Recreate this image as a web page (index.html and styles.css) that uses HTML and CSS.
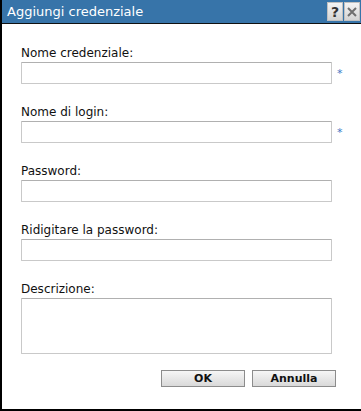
FILE: index.html
```html
<!DOCTYPE html>
<html lang="it">
<head>
  <meta charset="UTF-8">
  <title>Aggiungi credenziale</title>
  <link rel="stylesheet" href="styles.css">
</head>
<body>

  <!-- Dialog -->
  <div class="dialog">
    <div class="dialog-header">
      <span class="dialog-title">Aggiungi credenziale</span>
      <span class="header-btns">
        <span class="header-btn">?</span>
        <span class="header-btn close">
          <svg width="10" height="10" viewBox="0 0 10 10">
            <path d="M1 1 L9 9 M9 1 L1 9" stroke="#6f6f6f" stroke-width="2"/>
          </svg>
        </span>
      </span>
    </div>

    <div class="dialog-body">
      <div class="field">
        <label>Nome credenziale:</label>
        <div class="field-row">
          <input type="text">
          <span class="req">*</span>
        </div>
      </div>

      <div class="field">
        <label>Nome di login:</label>
        <div class="field-row">
          <input type="text">
          <span class="req">*</span>
        </div>
      </div>

      <div class="field">
        <label>Password:</label>
        <div class="field-row">
          <input type="password">
        </div>
      </div>

      <div class="field">
        <label>Ridigitare la password:</label>
        <div class="field-row">
          <input type="password">
        </div>
      </div>

      <div class="field">
        <label>Descrizione:</label>
        <div class="field-row">
          <textarea></textarea>
        </div>
      </div>

      <div class="buttons">
        <button>OK</button>
        <button>Annulla</button>
      </div>
    </div>
  </div>

</body>
</html>
```

FILE: styles.css
```css
body {
  margin: 0;
  font-family: 'DejaVu Sans', Verdana, sans-serif;
  background: #fff;
}

.dialog {
  width: 359px;
  height: 409px;
  border-left: 2px solid #000;
  border-bottom: 2px solid #000;
  background: #fff;
}

/* Header bar */
.dialog-header {
  height: 23px;
  background: #3774a9;
  border-bottom: 1px solid #111;
  display: flex;
  align-items: center;
  justify-content: space-between;
  padding-left: 5px;
  padding-right: 1px;
}

.dialog-title {
  color: #fff;
  font-size: 13px;
}

.header-btns {
  display: flex;
  gap: 1px;
}

.header-btn {
  width: 14px;
  height: 17px;
  background: linear-gradient(#f4f4f4, #d4d4d4);
  border: 1px solid #c0c0c0;
  color: #333;
  font-size: 14px;
  font-weight: bold;
  display: flex;
  align-items: center;
  justify-content: center;
  line-height: 1;
}

/* Form */
.dialog-body {
  padding: 22px 0 0 19px;
}

.field {
  margin-bottom: 21px;
}

.field label {
  display: block;
  font-size: 12px;
  line-height: 15px;
  color: #111;
  margin-bottom: 1px;
}

.field-row {
  display: flex;
  align-items: center;
}

.field input,
.field textarea {
  width: 311px;
  height: 22px;
  box-sizing: border-box;
  border: 1px solid #c9c9c9;
  border-top-color: #b0b0b0;
  border-radius: 1px;
  margin: 0;
  padding: 2px;
}

.field textarea {
  height: 56px;
  resize: none;
}

.req {
  color: #3b78c4;
  font-size: 11px;
  margin-left: 5px;
}

/* Bottom buttons */
.buttons {
  display: flex;
  gap: 7px;
  padding-left: 140px;
  margin-top: -5px;
}

.buttons button {
  width: 84px;
  height: 17px;
  padding: 0;
  font-family: 'DejaVu Sans', Verdana, sans-serif;
  font-size: 11px;
  font-weight: bold;
  color: #111;
  background: linear-gradient(#f6f6f6, #d9d9d9);
  border: 1px solid #8c8c8c;
}
```
